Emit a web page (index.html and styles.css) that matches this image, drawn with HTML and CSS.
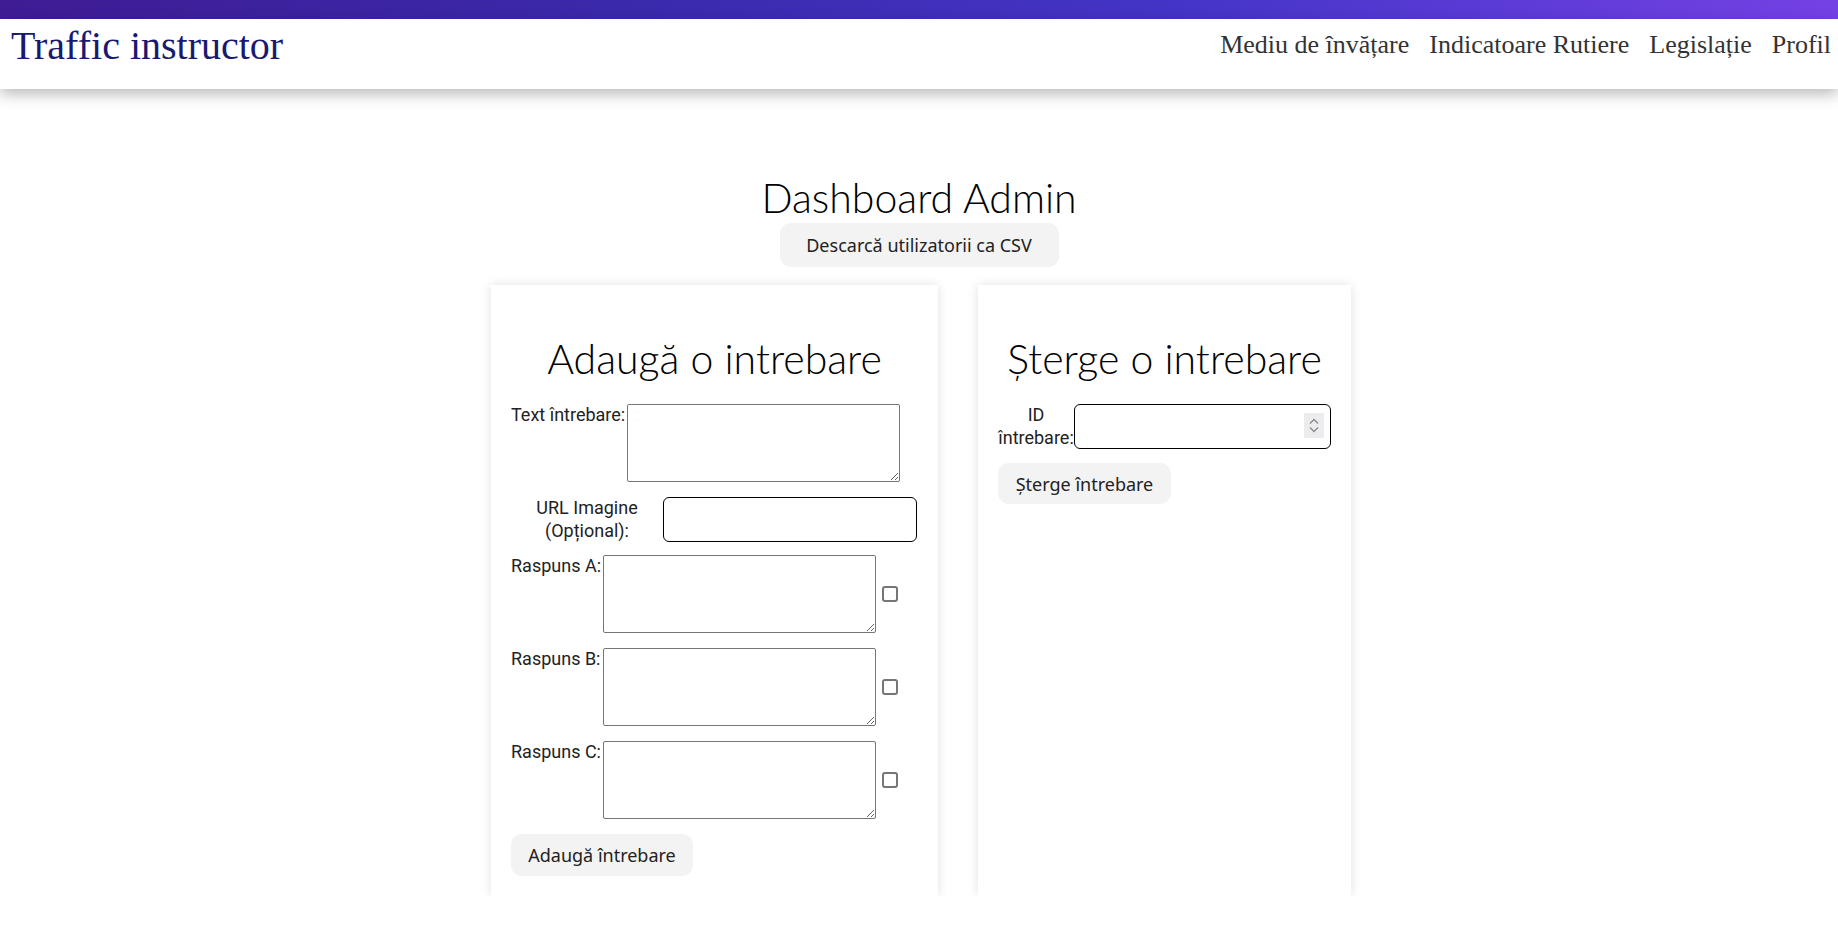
FILE: index.html
```html
<!DOCTYPE html>
<html lang="ro">
<head>
<meta charset="utf-8">
<title>Dashboard Admin</title>
<link rel="stylesheet" href="styles.css">
</head>
<body>
<div class="topbar"></div>
<header class="site-header">
  <div class="logo">Traffic instructor</div>
  <nav class="nav">
    <a href="#">Mediu de învățare</a>
    <a href="#">Indicatoare Rutiere</a>
    <a href="#">Legislație</a>
    <a href="#">Profil</a>
  </nav>
</header>
<main class="main">
  <h1 class="title">Dashboard Admin</h1>
  <button class="btn btn-csv">Descarcă utilizatorii ca CSV</button>
  <div class="cards">
    <section class="card card-add">
      <h2 class="card-title">Adaugă o intrebare</h2>
      <div class="row">
        <label class="lbl lbl-text">Text întrebare:</label>
        <textarea class="ta"></textarea>
      </div>
      <div class="row row-url">
        <label class="lbl lbl-url">URL Imagine (Opțional):</label>
        <input class="txt" type="text">
      </div>
      <div class="row">
        <label class="lbl lbl-ans">Raspuns A:</label>
        <textarea class="ta"></textarea>
        <input class="chk" type="checkbox">
      </div>
      <div class="row">
        <label class="lbl lbl-ans">Raspuns B:</label>
        <textarea class="ta"></textarea>
        <input class="chk" type="checkbox">
      </div>
      <div class="row">
        <label class="lbl lbl-ans">Raspuns C:</label>
        <textarea class="ta"></textarea>
        <input class="chk" type="checkbox">
      </div>
      <button class="btn btn-add">Adaugă întrebare</button>
    </section>
    <section class="card card-del">
      <h2 class="card-title">Șterge o intrebare</h2>
      <div class="row">
        <label class="lbl lbl-id">ID întrebare:</label>
        <div class="num-wrap">
          <input class="num" type="number">
          <span class="spin">
            <svg width="20" height="25" viewBox="0 0 20 25">
              <path d="M6 10.5 L10 6.5 L14 10.5" fill="none" stroke="#8a8a8a" stroke-width="1.3"/>
              <path d="M6 14.5 L10 18.5 L14 14.5" fill="none" stroke="#8a8a8a" stroke-width="1.3"/>
            </svg>
          </span>
        </div>
      </div>
      <button class="btn btn-del">Șterge întrebare</button>
    </section>
  </div>
</main>
</body>
</html>
```
FILE: styles.css
```css
html, body {
  margin: 0;
  padding: 0;
  background: #fff;
}

body {
  font-family: Roboto, "Noto Sans", sans-serif;
  color: #222;
}

.topbar {
  height: 19px;
  background: linear-gradient(to right, #3f1c94 0%, #3a2aac 35%, #4535c8 65%, #7541e4 100%);
}

.site-header {
  height: 70px;
  box-sizing: border-box;
  padding: 3px 7px 0 11px;
  display: flex;
  justify-content: space-between;
  align-items: flex-start;
  background: #fff;
  box-shadow: 0 5px 14px rgba(0, 0, 0, 0.28);
  position: relative;
  z-index: 1;
}

.logo {
  font-family: "Liberation Serif", "Times New Roman", serif;
  font-size: 40px;
  color: #191970;
  line-height: normal;
}

.nav {
  display: flex;
  gap: 20px;
  margin-top: 8px;
}

.nav a {
  font-family: "Liberation Serif", "Times New Roman", serif;
  font-size: 26px;
  color: #333;
  text-decoration: none;
  line-height: normal;
}

.main {
  display: flex;
  flex-direction: column;
  align-items: center;
  padding-top: 85px;
}

.title {
  margin: 0 0 2px;
  font-family: Lato, Roboto, sans-serif;
  font-weight: 300;
  font-size: 41px;
  line-height: 47px;
  color: #000;
}

.btn {
  font-family: "Noto Sans", "Open Sans", sans-serif;
  font-size: 18px;
  color: #222;
  background: #f3f3f3;
  border: none;
  border-radius: 11px;
  padding: 0;
  height: 42px;
  text-align: center;
  cursor: pointer;
}

.btn-csv {
  width: 279px;
  height: 44px;
}

.cards {
  display: flex;
  gap: 40px;
  margin-top: 18px;
  padding-left: 4px;
  align-items: stretch;
}

.card {
  background: #fff;
  box-shadow: 0 0 10px rgba(0, 0, 0, 0.12);
  padding: 20px;
  display: flex;
  flex-direction: column;
  align-items: flex-start;
}

.card-add {
  width: 447px;
  box-sizing: border-box;
}

.card-del {
  width: 373px;
  box-sizing: border-box;
}

.card-title {
  align-self: stretch;
  text-align: center;
  margin: 30px 0 22px;
  font-family: Lato, Roboto, sans-serif;
  font-weight: 300;
  font-size: 41px;
  line-height: 47px;
  color: #000;
}

.row {
  display: flex;
  align-items: flex-start;
  margin-bottom: 15px;
}

.row-url {
  margin-bottom: 13px;
}

.lbl {
  font-family: Roboto, sans-serif;
  font-size: 18px;
  line-height: 22.5px;
  color: #222;
  flex: none;
}

.lbl-text {
  width: 116px;
  white-space: nowrap;
}

.lbl-ans {
  width: 92px;
  white-space: nowrap;
}

.lbl-url {
  width: 152px;
  text-align: center;
}

.lbl-id {
  width: 76px;
  text-align: center;
}

.ta {
  width: 273px;
  height: 78px;
  box-sizing: border-box;
  border: 1px solid #767676;
  border-radius: 2px;
  padding: 2px;
  margin: 0;
  font-family: "Liberation Mono", monospace;
  font-size: 13px;
}

.txt {
  width: 254px;
  height: 45px;
  box-sizing: border-box;
  border: 1px solid #000;
  border-radius: 6px;
  margin: 0;
  padding: 2px 6px;
  font-size: 16px;
}

.chk {
  appearance: none;
  -webkit-appearance: none;
  width: 16px;
  height: 16px;
  box-sizing: border-box;
  border: 2px solid #767676;
  border-radius: 3px;
  margin: 0 0 0 6px;
  align-self: center;
  background: #fff;
}

.num-wrap {
  position: relative;
  width: 257px;
  height: 45px;
}

.num {
  width: 257px;
  height: 45px;
  box-sizing: border-box;
  border: 1px solid #000;
  border-radius: 6px;
  margin: 0;
  padding: 2px 6px;
  font-size: 16px;
  -moz-appearance: textfield;
}

.num::-webkit-inner-spin-button,
.num::-webkit-outer-spin-button {
  -webkit-appearance: none;
  margin: 0;
}

.spin {
  position: absolute;
  right: 7px;
  top: 9px;
  width: 20px;
  height: 25px;
  background: #ececee;
  display: block;
}

.spin svg {
  display: block;
}

.btn-add {
  width: 182px;
  height: 42px;
}

.btn-del {
  width: 173px;
  margin-top: -1px;
  height: 41px;
}
```
